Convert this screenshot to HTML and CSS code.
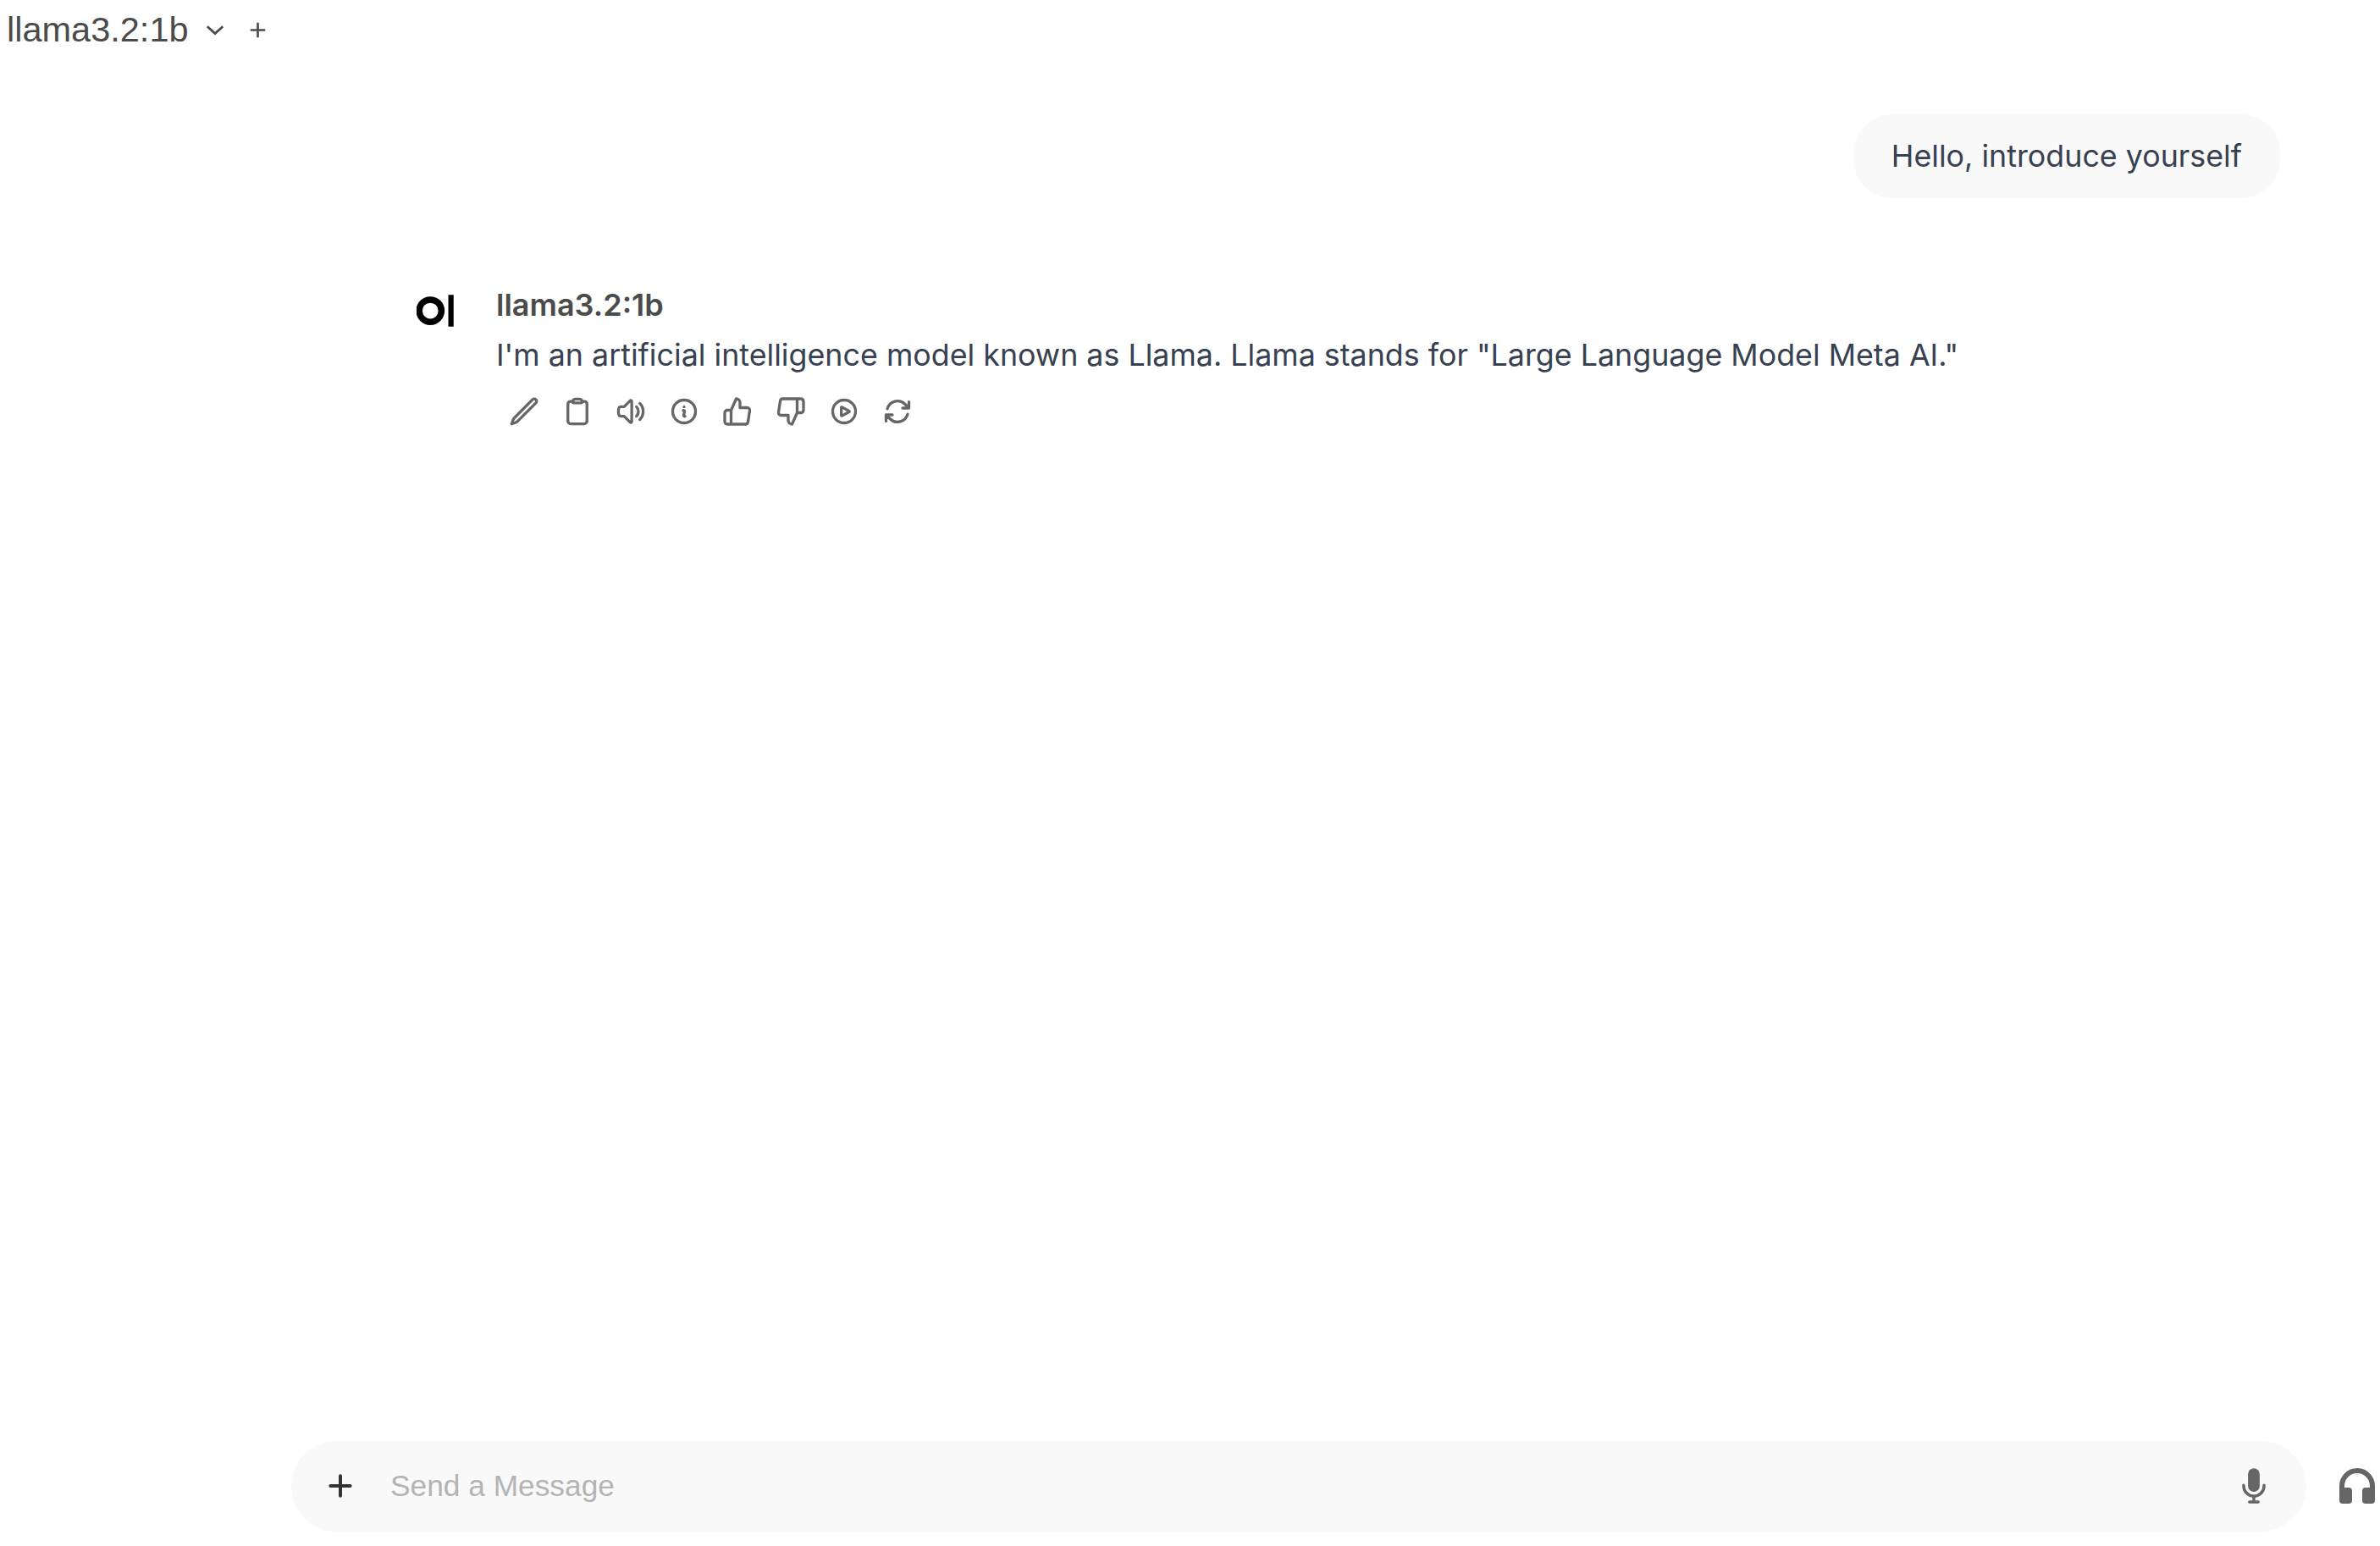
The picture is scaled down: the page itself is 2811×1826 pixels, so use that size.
FILE: index.html
```html
<!DOCTYPE html>
<html lang="en">
<head>
<meta charset="utf-8">
<title>llama3.2:1b</title>
<link rel="stylesheet" href="styles.css">
</head>
<body>
<div class="app">
  <header class="topbar">
    <span class="model-title">llama3.2:1b</span>
    <svg class="chev" viewBox="0 0 24 24"><path d="M2 8l10 9 10-9"/></svg>
    <svg class="add-model" viewBox="0 0 24 24"><path d="M12 2v20M2 12h20"/></svg>
  </header>
  <main class="chat">
    <div class="user-row"><div class="bubble">Hello, introduce yourself</div></div>
    <div class="reply">
      <svg class="logo" viewBox="0 0 36 32"><circle cx="13" cy="16" r="10.5" class="logo-ring"/><rect x="30" y="1" width="5" height="30" class="logo-bar"/></svg>
      <div class="reply-body">
        <div class="reply-name">llama3.2:1b</div>
        <p class="reply-text">I'm an artificial intelligence model known as Llama. Llama stands for "Large Language Model Meta AI."</p>
        <div class="actions">
          <svg class="act" viewBox="0 0 24 24"><path d="M18.2 3.1l.5-.5a1.8 1.8 0 1 1 2.6 2.6L7 19.6a4.5 4.5 0 0 1-1.7 1.1l-3.1 1.1 1.1-3.1a4.5 4.5 0 0 1 1.1-1.7L18.2 3.1z"/></svg>
          <svg class="act" viewBox="0 0 24 24"><path d="M15.666 3.888A2.25 2.25 0 0 0 13.5 2.25h-3c-1.03 0-1.9.693-2.166 1.638m7.332 0c.055.194.084.4.084.612v0a.75.75 0 0 1-.75.75H9a.75.75 0 0 1-.75-.75v0c0-.212.03-.418.084-.612m7.332 0c.646.049 1.288.11 1.927.184 1.1.128 1.907 1.077 1.907 2.185V19.5a2.25 2.25 0 0 1-2.25 2.25H6.75A2.25 2.25 0 0 1 4.5 19.5V6.257c0-1.108.806-2.057 1.907-2.185a48.208 48.208 0 0 1 1.927-.184"/></svg>
          <svg class="act" viewBox="0 0 24 24"><path d="M19.114 5.636a9 9 0 010 12.728M16.463 8.288a5.25 5.25 0 010 7.424M6.75 8.25l4.72-4.72a.75.75 0 011.28.53v15.88a.75.75 0 01-1.28.53l-4.72-4.72H4.51c-.88 0-1.704-.507-1.938-1.354A9.01 9.01 0 012.25 12c0-.83.112-1.633.322-2.396C2.806 8.756 3.63 8.25 4.51 8.25H6.75z"/></svg>
          <svg class="act" viewBox="0 0 24 24"><path d="M11.25 11.25l.041-.02a.75.75 0 011.063.852l-.708 2.836a.75.75 0 001.063.853l.041-.021M21 12a9 9 0 11-18 0 9 9 0 0118 0zm-9-3.75h.008v.008H12V8.25z"/></svg>
          <svg class="act" viewBox="0 0 24 24"><path d="M14 9V5a3 3 0 0 0-3-3l-4 9v11h11.28a2 2 0 0 0 2-1.7l1.38-9a2 2 0 0 0-2-2.3zM7 22H4a2 2 0 0 1-2-2v-7a2 2 0 0 1 2-2h3"/></svg>
          <svg class="act" viewBox="0 0 24 24"><path d="M10 15v4a3 3 0 0 0 3 3l4-9V2H5.72a2 2 0 0 0-2 1.7l-1.38 9a2 2 0 0 0 2 2.3zm7-13h2.67A2.31 2.31 0 0 1 22 4v7a2.31 2.31 0 0 1-2.33 2H17"/></svg>
          <svg class="act" viewBox="0 0 24 24"><path d="M21 12a9 9 0 1 1-18 0 9 9 0 0 1 18 0Z"/><path d="M15.91 11.672a.375.375 0 0 1 0 .656l-5.603 3.113a.375.375 0 0 1-.557-.328V8.887c0-.286.307-.466.557-.327l5.603 3.112Z"/></svg>
          <svg class="act" viewBox="0 0 24 24"><path d="M16.023 9.348h4.992v-.001M2.985 19.644v-4.992m0 0h4.992m-4.993 0l3.181 3.183a8.25 8.25 0 0013.803-3.7M4.031 9.865a8.25 8.25 0 0113.803-3.7l3.181 3.182m0-4.991v4.99"/></svg>
        </div>
      </div>
    </div>
  </main>
  <footer class="composer">
    <div class="input-pill">
      <svg class="plus" viewBox="0 0 24 24"><path d="M12 2v20M2 12h20"/></svg>
      <span class="placeholder">Send a Message</span>
      <svg class="mic" viewBox="0 0 20 20"><path d="M7 4a3 3 0 016 0v6a3 3 0 11-6 0V4z"/><path d="M5.5 9.643a.75.75 0 00-1.5 0V10c0 3.06 2.29 5.585 5.25 5.954V17.5h-1.5a.75.75 0 000 1.5h4.5a.75.75 0 000-1.5h-1.5v-1.546A6.001 6.001 0 0016 10v-.357a.75.75 0 00-1.5 0V10a4.5 4.5 0 01-9 0v-.357z"/></svg>
    </div>
    <svg class="phones" viewBox="0 0 42 42"><path class="band" d="M3 26V21a18 18 0 0 1 36 0v5"/><rect class="pad" x="0" y="23" width="15" height="19" rx="4"/><rect class="pad" x="27" y="23" width="15" height="19" rx="4"/></svg>
  </footer>
</div>
</body>
</html>
```
FILE: styles.css
```css
* { box-sizing: border-box; }
html, body { margin: 0; height: 100%; background: #fff; }
.app { height: 1826px; display: flex; flex-direction: column; font-family: Inter, "Liberation Sans", sans-serif; }

.topbar { height: 70px; display: flex; align-items: center; padding-left: 8px; color: #4b4b4b; }
.model-title { font-family: "Liberation Sans", Arial, sans-serif; font-size: 41.5px; line-height: 70px; }
.chev { width: 22px; height: 22px; margin-left: 20px; fill: none; stroke: #4b4b4b; stroke-width: 3; }
.add-model { width: 21px; height: 21px; margin-left: 29px; fill: none; stroke: #4b4b4b; stroke-width: 3; }

.chat { flex: 1; display: flex; flex-direction: column; }
.user-row { display: flex; justify-content: flex-end; padding: 65px 118px 0 0; }
.bubble { height: 99px; padding: 0 45px; border-radius: 46px; background: #f9f9f9; color: #374151; font-size: 35.8px; line-height: 99px; }

.reply { display: flex; margin-top: 98px; padding-left: 492px; }
.logo { width: 45px; height: 40px; margin-top: 15px; flex: none; }
.logo-ring { fill: none; stroke: #000; stroke-width: 6; }
.logo-bar { fill: #000; }
.reply-body { margin-left: 49px; }
.reply-name { color: #4b4b4b; font-size: 36px; font-weight: 600; line-height: 50px; padding-top: 3px; }
.reply-text { margin: 5px 0 0; color: #374151; font-size: 35.8px; line-height: 58px; }
.actions { display: flex; gap: 27px; margin-top: 20px; padding-left: 15px; }
.act { width: 36px; height: 36px; flex: none; fill: none; stroke: #666; stroke-width: 2.2; stroke-linecap: round; stroke-linejoin: round; }

.composer { height: 126px; padding: 0 0 16px 344px; display: flex; align-items: center; }
.input-pill { width: 2380px; height: 107px; border-radius: 54px; background: #f9f9f9; display: flex; align-items: center; padding: 0 39px 0 44px; }
.plus { width: 28px; height: 28px; flex: none; fill: none; stroke: #333; stroke-width: 3.4; stroke-linecap: round; }
.placeholder { flex: 1; margin-left: 45px; font-family: "Liberation Sans", Arial, sans-serif; font-size: 35.3px; color: #b4b4b4; }
.mic { width: 46px; height: 46px; flex: none; fill: #666; }
.phones { width: 42px; height: 42px; margin-left: 39px; flex: none; }
.band { fill: none; stroke: #666; stroke-width: 6; }
.pad { fill: #666; }
```
